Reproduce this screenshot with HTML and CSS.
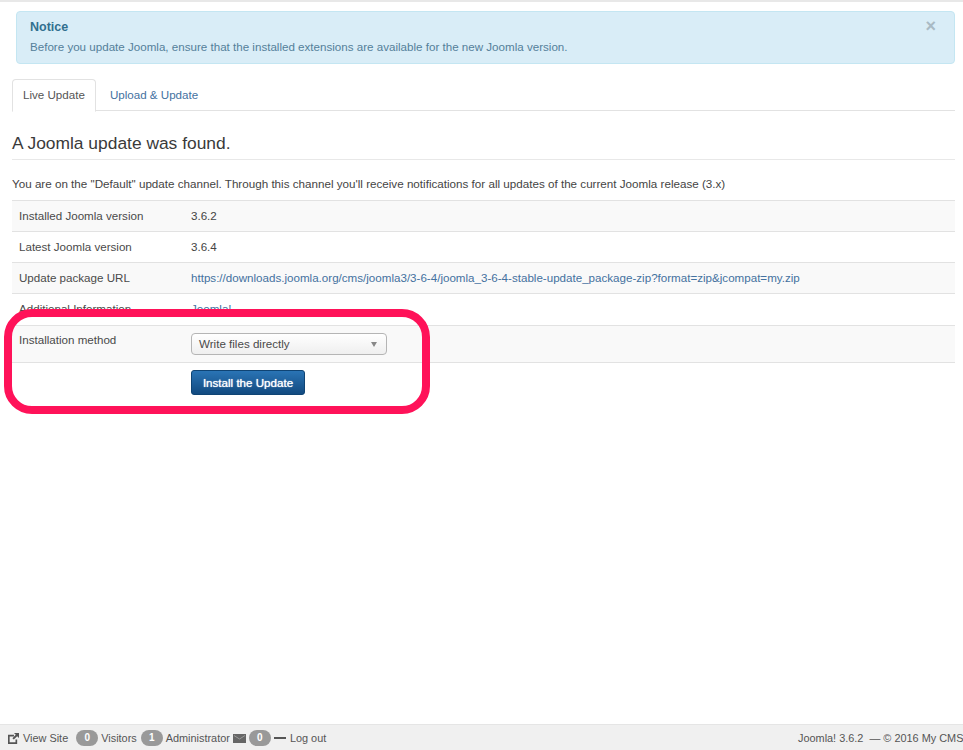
FILE: index.html
```html
<!DOCTYPE html>
<html lang="en">
<head>
<meta charset="utf-8">
<title>Joomla Update</title>
<link rel="stylesheet" href="styles.css">
</head>
<body>
<div class="page">
  <main class="content">
    <div class="alert">
      <span class="alert-close">×</span>
      <h4 class="alert-title">Notice</h4>
      <p class="alert-text">Before you update Joomla, ensure that the installed extensions are available for the new Joomla version.</p>
    </div>
    <ul class="tabs">
      <li class="tab tab-active">Live Update</li>
      <li class="tab"><a href="#">Upload &amp; Update</a></li>
    </ul>
    <h2 class="heading">A Joomla update was found.</h2>
    <p class="channel">You are on the "Default" update channel. Through this channel you'll receive notifications for all updates of the current Joomla release (3.x)</p>
    <table class="info">
      <tbody>
        <tr class="odd"><td class="label">Installed Joomla version</td><td>3.6.2</td></tr>
        <tr><td class="label">Latest Joomla version</td><td>3.6.4</td></tr>
        <tr class="odd"><td class="label">Update package URL</td><td><a href="#">https://downloads.joomla.org/cms/joomla3/3-6-4/joomla_3-6-4-stable-update_package-zip?format=zip&amp;jcompat=my.zip</a></td></tr>
        <tr class="extra"><td class="label">Additional Information</td><td><a href="#">Joomla!</a></td></tr>
        <tr class="odd method"><td class="label">Installation method</td><td class="method-field"><div class="select"><span>Write files directly</span><i class="caret"></i></div></td></tr>
        <tr class="action"><td class="label"></td><td><button class="btn" type="button">Install the Update</button></td></tr>
      </tbody>
    </table>
    <div class="highlight"></div>
  </main>
  <footer class="status">
    <div class="status-left">
      <span class="item"><svg class="icon" viewBox="0 0 12 12" width="11" height="11"><path d="M0 2h6.500v1.800H1.800v6.400h6.400V7H10v5H0z" fill="#555"/><path d="M6.500 0H12v5.500L10 3.500 6.300 7.200 4.800 5.700 8.500 2z" fill="#555"/></svg>View Site</span>
      <span class="item item-visitors"><b class="badge">0</b>Visitors</span>
      <span class="item"><b class="badge">1</b>Administrator</span>
      <span class="item"><svg class="icon" viewBox="0 0 13 9" width="13" height="9"><rect width="13" height="9" fill="#666"/><path d="M1 1.500l5.500 3.500 5.500-3.500" fill="none" stroke="#999" stroke-width="1"/></svg><b class="badge">0</b></span>
      <span class="item"><i class="minus"></i>Log out</span>
    </div>
    <div class="status-right">Joomla! 3.6.2 &nbsp;— © 2016 My CMS</div>
  </footer>
</div>
</body>
</html>
```
FILE: styles.css
```css
* { box-sizing: border-box; }
html, body { margin: 0; padding: 0; background: #fff; overflow: hidden; }
body { font-family: "Liberation Sans", Arial, sans-serif; font-size: 11.6px; line-height: 18px; color: #444; }
a { color: #44719f; text-decoration: none; }
.page { display: flex; flex-direction: column; height: 750px; border-top: 2px solid #e8e8e8; }
.content { position: relative; flex: 1; padding: 9px 8px 0 12px; }
.alert { position: relative; margin: 0 0 15px 4px; height: 53px; padding: 6px 13px 5px; background: #d9edf7; border: 1px solid #c4e6f2; border-radius: 4px; color: #54809a; }
.alert-title { margin: 0 0 2px; font-size: 12.5px; line-height: 18px; font-weight: bold; color: #31708f; }
.alert-text { margin: 0; font-size: 11.6px; line-height: 18px; }
.alert-close { position: absolute; top: 5px; right: 18px; font-size: 18px; line-height: 18px; font-weight: bold; color: #a9bac4; }
.tabs { display: flex; margin: 0 0 22px; padding: 0; list-style: none; height: 32px; border-bottom: 1px solid #e2e2e2; }
.tab { height: 32px; padding: 7px 12px 6px; line-height: 18px; }
.tab-active { height: 33px; padding: 6px 10px; border: 1px solid #e2e2e2; border-bottom-color: #fff; border-radius: 4px 4px 0 0; background: #fff; color: #555; margin-right: 2px; }
.heading { margin: 0 0 15px; height: 27px; padding-bottom: 6px; font-size: 17.4px; line-height: 21px; font-weight: normal; color: #3a3a3a; border-bottom: 1px solid #e8e8e8; }
.channel { margin: 0 0 7px; font-size: 11.65px; line-height: 18px; }
.info { width: 100%; border-collapse: collapse; font-size: 11.6px; }
.info td { height: 31px; padding: 6px 7px; border-top: 1px solid #e2e2e2; vertical-align: top; line-height: 18px; }
.info .label { width: 172px; color: #4a4a4a; }
.odd { background: #f9f9f9; }
.extra td { height: 32px; }
.method td { height: 37px; padding-top: 5px; }
.method .method-field { padding-top: 7px; }
.action td { padding-top: 7px; }
.select { display: flex; align-items: center; justify-content: space-between; width: 196px; height: 22px; padding: 0 7px; background: linear-gradient(#fff, #efefef); border: 1px solid #b5b5b5; border-radius: 4px; color: #4a4a4a; }
.caret { width: 0; height: 0; border-left: 3px solid transparent; border-right: 3px solid transparent; border-top: 5px solid #888; margin-right: 2px; }
.btn { display: block; width: 114px; height: 25px; padding: 0; background: linear-gradient(#2a74b5, #124a80); border: 1px solid #0f4474; border-radius: 3px; color: #fff; font: normal 11.6px "Liberation Sans", Arial, sans-serif; text-shadow: 0 0 1px #fff; }
.highlight { position: absolute; left: 4px; top: 307px; width: 426px; height: 105px; border: 8px solid #ff1259; border-radius: 28px; pointer-events: none; }
.status { display: flex; justify-content: space-between; align-items: center; height: 26px; padding: 1px 0 0 8px; background: #f0f0f0; border-top: 1px solid #e5e5e5; font-size: 10.9px; color: #555; white-space: nowrap; }
.status-left { display: flex; align-items: center; gap: 3px; }
.item { display: flex; align-items: center; gap: 3px; }
.item:first-child { margin-right: 5px; gap: 4px; }
.item-visitors { margin-right: 1px; }
.badge { display: inline-block; min-width: 22px; height: 16px; padding: 0 4px; border-radius: 8px; background: #999; color: #fff; font-size: 10px; line-height: 16px; text-align: center; }
.minus { display: inline-block; width: 12px; height: 2px; background: #555; margin-right: 1px; }
.status-right { width: 165px; }
```
